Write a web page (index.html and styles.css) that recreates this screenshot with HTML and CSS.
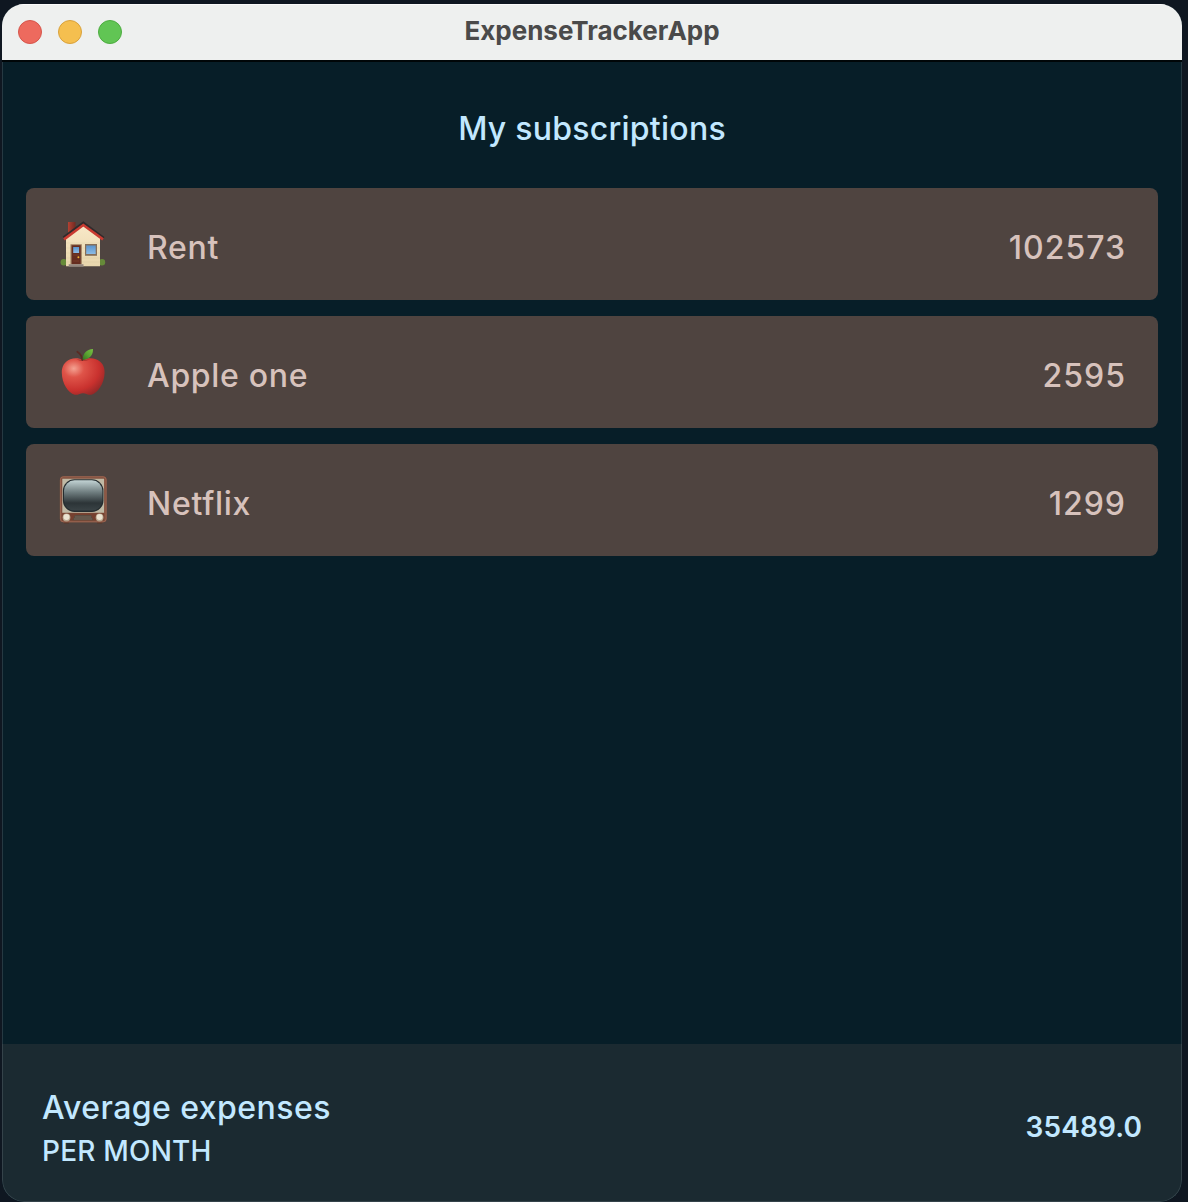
FILE: index.html
```
<!DOCTYPE html>
<html lang="en">
  <head>
    <meta charset="utf-8">
    <title>ExpenseTrackerApp</title>
    <link rel="stylesheet" href="styles.css">
  </head>
  <body>
    <div class="window">
      <header class="titlebar">
        <div class="lights">
          <span class="light close"></span>
          <span class="light minimize"></span>
          <span class="light maximize"></span>
        </div>
        <div class="app-name">ExpenseTrackerApp</div>
      </header>
      <main class="content">
        <h1>My subscriptions</h1>
        <ul class="list">
          <li class="item">
            <svg class="icon" viewBox="0 0 66 66">
              <defs>
                <linearGradient id="chimney"><stop offset="0" stop-color="#b34132"/><stop offset="1" stop-color="#702a22"/></linearGradient>
                <linearGradient id="glass" x2="0" y2="1"><stop offset="0" stop-color="#5b94cd"/><stop offset="1" stop-color="#8dbce5"/></linearGradient>
                <linearGradient id="wall" x2="0" y2="1"><stop offset="0" stop-color="#f9e9c9"/><stop offset="1" stop-color="#e8d6ac"/></linearGradient>
              </defs>
              <circle cx="13.8" cy="51.3" r="3.2" fill="#668a39"/>
              <circle cx="52" cy="51.3" r="3.2" fill="#668a39"/>
              <path d="M18 11h7.500v10L18 26z" fill="url(#chimney)"/>
              <path d="M16 26 33.300 13 50 26v29.300H16z" fill="url(#wall)"/>
              <path d="M16 32h34M16 37h34M16 42h34M16 47h34M16 51h34" stroke="#cdbb96" stroke-width=".4" opacity=".5"/>
              <path d="M13.500 26.600 33.300 11.800 53.700 27" fill="none" stroke="#302b2c" stroke-width="2.600"/>
              <path d="M14 28.400 33.300 14 53 28.400" fill="none" stroke="#c93b31" stroke-width="2.600"/>
              <path d="M20.500 33.200h11.300v20H20.500z" fill="#9b7b5d"/>
              <path d="M21.700 34.300h9v19h-9z" fill="#652d20"/>
              <path d="M23.200 36h5.900v6h-5.900z" fill="url(#glass)"/>
              <path d="M23.200 44h5.900M23.200 50h5.900" stroke="#82432e" stroke-width=".7"/>
              <circle cx="28.400" cy="46.200" r="1" fill="#f2b233"/>
              <path d="M18.700 53.200h14.800v2.500H18.700z" fill="#938780"/>
              <path d="M35 33h12v11.800H35z" fill="#866f59"/>
              <path d="M36.200 34.500h9.500v8.600h-9.500z" fill="url(#glass)"/>
            </svg>
            <span class="name">Rent</span>
            <span class="amount">102573</span>
          </li>
          <li class="item">
            <svg class="icon" viewBox="0 0 66 66">
              <defs>
                <radialGradient id="apple" cx=".28" cy=".28" r=".85"><stop offset="0" stop-color="#f4a292"/><stop offset=".28" stop-color="#df5449"/><stop offset=".7" stop-color="#c9312e"/><stop offset="1" stop-color="#8e2727"/></radialGradient>
                <linearGradient id="leaf" x1="0" y1="1" x2="1" y2="0"><stop offset="0" stop-color="#34711f"/><stop offset=".5" stop-color="#5ba532"/><stop offset="1" stop-color="#78c043"/></linearGradient>
              </defs>
              <path d="M33 21c4-2 9-2.200 13-.7 6.100 2.200 8.800 7.400 8.600 13.500C54.300 44.500 48 54 41.500 55.700c-3.300.8-5.500-1.500-8.500-1.500s-5 2.300-8.300 1.500C18 54 12 44.500 11.800 33.800c-.1-6.100 2.600-11.300 8.500-13.500 4-1.500 8.700-1.300 12.700.7z" fill="url(#apple)"/>
              <path d="M26.500 20.200c4 2.500 9 2.500 13.500 0-4 .4-9 .4-13.500 0z" fill="#8e2120" opacity=".5"/>
              <path d="M32.300 21c-.3-3.500-1.800-6.300-5-8.300" fill="none" stroke="#5a2a22" stroke-width="1.700" stroke-linecap="round"/>
              <path d="M32.600 20.700c.2-6.100 3.700-10.200 10.400-10.700.2 6-3.400 10.400-10.400 10.700z" fill="url(#leaf)"/>
            </svg>
            <span class="name">Apple one</span>
            <span class="amount">2595</span>
          </li>
          <li class="item">
            <svg class="icon" viewBox="0 0 66 66">
              <defs>
                <linearGradient id="screen" x2="0" y2="1"><stop offset="0" stop-color="#c2d3d4"/><stop offset=".4" stop-color="#6e7c7e"/><stop offset=".75" stop-color="#2c3437"/><stop offset="1" stop-color="#3a4346"/></linearGradient>
              </defs>
              <path d="M13 54h6v2.500h-5zM47 54h6l-1 2.500h-5z" fill="#583629"/>
              <rect x="9.900" y="9.300" width="46.700" height="46" rx="3.500" fill="#83503f"/>
              <rect x="10.400" y="9.800" width="45.700" height="45" rx="3" fill="none" stroke="#9f6b56" stroke-width=".8"/>
              <path d="M12.300 11.800h41.800v34H12.300z" fill="#c0baa5"/>
              <rect x="12.900" y="12.300" width="40.600" height="32.600" rx="11.500" fill="#252d30"/>
              <rect x="14" y="13.300" width="38.400" height="30.300" rx="10.500" fill="url(#screen)"/>
              <path d="M12.300 46.300h41.800v7.200H12.300z" fill="#75402f"/>
              <path d="M25 48h16l2.500 5.200h-21z" fill="#594c41"/>
              <path d="M25 50h16M24 52h18" stroke="#867768" stroke-width=".6"/>
              <circle cx="16.500" cy="50.500" r="3.900" fill="#b8a58d"/>
              <circle cx="16.500" cy="50" r="3" fill="#ebe3d1"/>
              <circle cx="49.600" cy="50.500" r="3.900" fill="#b8a58d"/>
              <circle cx="49.600" cy="50" r="3" fill="#ebe3d1"/>
            </svg>
            <span class="name">Netflix</span>
            <span class="amount">1299</span>
          </li>
        </ul>
      </main>
      <footer class="summary">
        <div>
          <div class="label">Average expenses</div>
          <div class="period">PER MONTH</div>
        </div>
        <div class="total">35489.0</div>
      </footer>
    </div>
  </body>
</html>
```
FILE: styles.css
```
* {
  box-sizing:border-box;
}

body {
  margin:0;
  height:1202px;
  padding:4px 6px 0 2px;
  overflow:hidden;
  background:#0f1721;
  font-family:Inter, 'Liberation Sans', sans-serif;
}

.window {
  display:flex;
  flex-direction:column;
  height:1198px;
  border-radius:22px;
  overflow:hidden;
  background:#071e28;
}

.titlebar {
  display:grid;
  grid-template-columns:1fr auto 1fr;
  align-items:center;
  flex:none;
  height:58px;
  padding-bottom:1px;
  background:#eef0ef;
  border-top:1px solid #fbfbfb;
  border-bottom:2px solid #000608;
}

.lights {
  display:flex;
  gap:16px;
  padding-left:16px;
}

.light {
  width:24px;
  height:24px;
  border-radius:50%;
  border:1px solid;
}

.close {
  background:#ed6a5e;
  border-color:#d5554b;
}

.minimize {
  background:#f5bf4f;
  border-color:#d8a13c;
}

.maximize {
  background:#61c554;
  border-color:#4dac40;
}

.app-name {
  padding-bottom:2px;
  color:#4a4a4a;
  font-size:26px;
  font-weight:700;
  line-height:32px;
}

.content {
  flex:1;
  padding:0 23px;
  border:solid #263942;
  border-width:0 1px;
}

h1 {
  margin:0;
  padding-top:43px;
  height:126px;
  color:#c2e8ff;
  font-size:32px;
  font-weight:550;
  line-height:48px;
  letter-spacing:0.25px;
  text-align:center;
}

.list {
  display:flex;
  flex-direction:column;
  gap:16px;
  margin:0;
  padding:0;
  list-style:none;
}

.item {
  display:flex;
  align-items:center;
  height:112px;
  padding:0 32px 0 24px;
  border-radius:8px;
  background:#4f4440;
  color:#d7c2bc;
  font-size:32px;
  font-weight:450;
  line-height:48px;
  letter-spacing:0.7px;
}

.icon {
  width:66px;
  height:66px;
}

.name {
  padding:8px 0 0 31px;
}

.amount {
  margin-left:auto;
  padding-top:8px;
  letter-spacing:1px;
}

.summary {
  display:flex;
  align-items:center;
  justify-content:space-between;
  flex:none;
  height:158px;
  padding:9px 39px 0 39px;
  border:solid #35434a;
  border-width:0 1px 1px;
  border-radius:0 0 22px 22px;
  background:#1b2a31;
  color:#c2e8ff;
}

.label {
  font-size:32px;
  font-weight:450;
  line-height:48px;
  letter-spacing:0.45px;
}

.period {
  font-size:28px;
  font-weight:450;
  line-height:38px;
  letter-spacing:0.2px;
}

.total {
  font-size:28px;
  font-weight:600;
  line-height:40px;
  letter-spacing:0.1px;
}
```
